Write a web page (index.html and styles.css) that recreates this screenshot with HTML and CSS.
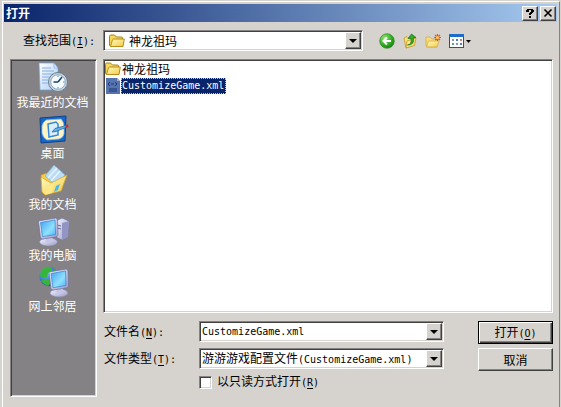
FILE: index.html
```html
<!DOCTYPE html>
<html lang="zh-CN">
<head>
<meta charset="utf-8">
<meta name="viewport" content="width=device-width, initial-scale=1">
<title>打开</title>
<link rel="stylesheet" href="styles.css">
</head>
<body>
<svg class="defs" width="0" height="0" aria-hidden="true">
  <defs>
    <linearGradient id="gold" x1="0" y1="0" x2="1" y2="1"><stop offset="0" stop-color="#fffbc0"/><stop offset="1" stop-color="#f3cb48"/></linearGradient>
    <linearGradient id="paper" x1="0" y1="0" x2="1" y2="1"><stop offset="0" stop-color="#fff"/><stop offset="1" stop-color="#a9cdf5"/></linearGradient>
    <linearGradient id="screen" x1="0" y1="0" x2="1" y2="1"><stop offset="0" stop-color="#3fa2f2"/><stop offset=".6" stop-color="#8fe0fd"/><stop offset="1" stop-color="#4db4f4"/></linearGradient>
    <linearGradient id="shell" x1="0" y1="0" x2="1" y2="1"><stop offset="0" stop-color="#f4f4ff"/><stop offset="1" stop-color="#9b9cc8"/></linearGradient>
    <radialGradient id="green" cx=".35" cy=".3" r=".8"><stop offset="0" stop-color="#9be27c"/><stop offset=".5" stop-color="#3cb52c"/><stop offset="1" stop-color="#14780f"/></radialGradient>
    <radialGradient id="earth" cx=".35" cy=".3" r=".8"><stop offset="0" stop-color="#7cc4ff"/><stop offset="1" stop-color="#0a3c9c"/></radialGradient>
    <symbol id="folder" viewBox="0 0 16 16">
      <path d="M.5 12.500V3.500Q.5 2 2 2H5.500L7.500 4H12.500Q13.500 4 13.500 5V13.500H2Z" fill="#f6d860" stroke="#a88314"/>
      <path d="M1.500 13.500L3.500 6.700Q3.800 6 4.600 6H15.300L14 13.500Z" fill="url(#gold)" stroke="#b58d18"/>
    </symbol>
    <symbol id="monitor" viewBox="0 0 20 30">
      <ellipse cx="10" cy="25" rx="9" ry="4" fill="url(#shell)" stroke="#8787b0" stroke-width=".6"/>
      <path d="M9 18L14 17L14 25Q10 27 7 24Z" fill="#c5c6e6"/>
      <path d="M0 4L17 1Q19 1 19 3L19.500 18Q19 20 17 20L4 22Q2 22 1.800 20Z" fill="url(#shell)" stroke="#6d6e9c" stroke-width=".7"/>
      <path d="M2 5.500L16.500 3L17 17.500L4 19.700Z" fill="url(#screen)" stroke="#2c76c4" stroke-width=".6"/>
    </symbol>
  </defs>
</svg>

<main class="window">
  <header class="titlebar">
    <h1>打开</h1>
    <button class="caption" type="button" aria-label="帮助">
      <svg width="10" height="10" viewBox="0 0 10 10"><path d="M1 4V2H2V1H8V2H9V4H8V5H7V6H6V7H4V5H5V4H6V2H4V4ZM4 8H6V10H4Z"/></svg>
    </button>
    <button class="caption" type="button" aria-label="关闭">
      <svg width="10" height="10" viewBox="0 0 10 10"><path d="M1.500 1.500L8.500 8.500M8.500 1.500L1.500 8.500" stroke="#000" stroke-width="1.600"/></svg>
    </button>
  </header>

  <form class="dialog">
    <div class="lookup">
      <label for="place">查找范围<span class="en">(<u>I</u>):</span></label>
      <div class="combo lookup-combo">
        <svg class="combo-icon" width="16" height="16"><use href="#folder"/></svg>
        <select id="place"><option>神龙祖玛</option></select>
        <span class="arrow"></span>
      </div>
      <div class="tools">
        <button type="button" aria-label="后退">
          <svg width="16" height="16" viewBox="0 0 16 16"><circle cx="8" cy="8" r="7.300" fill="url(#green)" stroke="#2f8f24" stroke-width=".7"/><path d="M12 8H5M8 4.500L4.500 8L8 11.500" fill="none" stroke="#fff" stroke-width="2"/></svg>
        </button>
        <button type="button" aria-label="向上">
          <svg width="16" height="16" viewBox="0 0 16 16"><path d="M2 5L5 3.500L6.500 5L11 4L12 12L4 15Z" fill="#f7df74" stroke="#c49a28" stroke-width=".8"/><path d="M4 15L5 8L14 5L12.500 12.500Z" fill="url(#gold)" stroke="#c49a28" stroke-width=".8"/><path d="M5.500 12Q10 11.500 9 5.500H6L9.500 1L14 4.500H11.300Q13 12 5.500 12Z" fill="#35ad2b" stroke="#176d13" stroke-width=".7"/></svg>
        </button>
        <button type="button" aria-label="新建文件夹">
          <svg width="16" height="16" viewBox="0 0 16 16"><path d="M1 13V4H5L7 6H12V14H2Z" fill="#f7dc76" stroke="#d0a640" stroke-width=".7"/><path d="M1.500 14L3.500 8H14L12 14Z" fill="url(#gold)" stroke="#d0a640" stroke-width=".7"/><path d="M12.500 1V8M9 4.500H16M10 2L15 7M15 2L10 7" stroke="#e8501c" stroke-width="1.200"/><circle cx="12.500" cy="4.500" r="1.500" fill="#ffd46a"/></svg>
        </button>
        <button class="view" type="button" aria-label="查看">
          <svg width="23" height="16" viewBox="0 0 23 16"><rect x="1.500" y="1.500" width="14" height="13" fill="#fff" stroke="#0c57b0"/><path d="M1 1H16V4H1Z" fill="#1b6ccc"/><path d="M4 6H6V8H4ZM8 10H10V12H8Z" fill="#8597b8"/><path d="M8 6H10V8H8ZM12 10H14V12H12Z" fill="#557cc0"/><path d="M12 6H14V8H12Z" fill="#c08378"/><path d="M4 10H6V12H4Z" fill="#55a484"/><path d="M18 7H23L20.500 10Z"/></svg>
        </button>
      </div>
    </div>

    <nav class="places">
      <a href="#recent">
        <svg width="32" height="32" viewBox="0 0 32 32"><path d="M2 1H17L21 6V28H3Z" fill="url(#paper)" stroke="#6ea0df" stroke-width=".7"/><path d="M17 1V6H21Z" fill="#d9ebff" stroke="#6ea0df" stroke-width=".6"/><path d="M5 6H14M5 9H17M5 12H16M5 15H12M5 18H11M5 21H11" stroke="#86aee5"/><circle cx="21" cy="20" r="9.500" fill="#c7d6e4" stroke="#66798c"/><circle cx="21" cy="20" r="7.300" fill="#f4fbff" stroke="#8fa6bb"/><path d="M21 20L25 15M21 20H16.500" stroke="#1d4267" stroke-width="1.600"/><path d="M21 13.500V15M21 25V26.500M26 20H27.500" stroke="#5d85ac"/></svg>
        <span>我最近的文档</span>
      </a>
      <a href="#desktop">
        <svg width="32" height="32" viewBox="0 0 32 32"><path d="M3 5L29 3L28 28L4 30Z" fill="#1668c8" stroke="#0c4294"/><path d="M9 7L24 6Q27 9 27 14V21Q26 25 22 26L10 27Q6 25 5 20V13Q6 9 9 7Z" fill="#fff5c4" stroke="#7fb7ef" stroke-width=".8"/><path d="M11 11L19 9L21 11V22L12 24Z" fill="#d8efff" stroke="#3888dc" stroke-width="1.500"/><path d="M15 19L18 15.500L29 12.500L30 14L19 18.500Z" fill="#5eb2ee" stroke="#235a92" stroke-width=".7"/><path d="M28 12L31 11.500L31.500 14L29 15Z" fill="#c92c35"/></svg>
        <span>桌面</span>
      </a>
      <a href="#documents">
        <svg width="32" height="32" viewBox="0 0 32 32"><path d="M4 11L10 9L13 12L25 10V26L8 30L5 27Z" fill="#f6cf4b" stroke="#c5961c" stroke-width=".7"/><path d="M17 1L28 11L20 22L8 12Z" fill="#badcf6" stroke="#78acd6" stroke-width=".7"/><path d="M20 4L11 14M23 7L14 17" stroke="#e6f5ff" stroke-width="1.500"/><path d="M4 13L14 19L30 11L24 27L8 31L5 28Z" fill="url(#gold)" stroke="#d1a225" stroke-width=".7"/><path d="M14 19L17 20L15 29L8 31Z" fill="#ffe887"/><path d="M19 22L23 20L21 26L17 28Z" fill="#49b9e5"/></svg>
        <span>我的文档</span>
      </a>
      <a href="#computer">
        <svg width="32" height="32" viewBox="0 0 32 32"><path d="M19 6L25 3L32 6L31 22L25 25L19 22Z" fill="url(#shell)" stroke="#7576a5" stroke-width=".7"/><path d="M25 8V25L31 22L32 6Z" fill="#9294c2"/><path d="M20 10L24 11M20 13L24 14" stroke="#6769a0"/><use href="#monitor" x="1" y="2" width="21" height="30"/></svg>
        <span>我的电脑</span>
      </a>
      <a href="#network">
        <svg width="32" height="32" viewBox="0 0 32 32"><circle cx="12" cy="10.500" r="9.700" fill="url(#earth)"/><path d="M5 4Q9 0 14 1L15 5L11 7L10 11L5 12L2.500 9ZM7 13L12 13L14 17L11 20Q6 18 4 15ZM17 3Q21 5 21 10L17 9Z" fill="#36b53a"/><use href="#monitor" x="12" y="2" width="20" height="30"/></svg>
        <span>网上邻居</span>
      </a>
    </nav>

    <ul class="files">
      <li><svg width="16" height="16"><use href="#folder"/></svg><span class="name">神龙祖玛</span></li>
      <li class="selected"><svg width="16" height="16" viewBox="0 0 16 16"><path d="M1 0H12L15 3V16H1Z" fill="#5673ad"/><path d="M12 0V3H15Z" fill="#9db0d3"/><path d="M5 4L3 6L5 8M10 4L12 6L10 8M6 6H9M4 11H12M4 13H12" fill="none" stroke="#183974"/></svg><span class="name en">CustomizeGame.xml</span></li>
    </ul>

    <div class="fields">
      <label for="filename">文件名<span class="en">(<u>N</u>):</span></label>
      <div class="combo">
        <input id="filename" class="en" type="text" value="CustomizeGame.xml">
        <button class="arrow" type="button" aria-label="文件名列表"></button>
      </div>
      <label for="filetype">文件类型<span class="en">(<u>T</u>):</span></label>
      <div class="combo">
        <select id="filetype"><button><selectedcontent></selectedcontent></button><option>游游游戏配置文件<span class="en">(CustomizeGame.xml)</span></option></select>
        <span class="arrow"></span>
      </div>
      <div class="readonly">
        <input id="readonly" type="checkbox">
        <label for="readonly">以只读方式打开<span class="en">(<u>R</u>)</span></label>
      </div>
    </div>

    <div class="actions">
      <button class="push default" type="submit">打开<span class="en">(<u>O</u>)</span></button>
      <button class="push" type="button">取消</button>
    </div>
  </form>
</main>
</body>
</html>
```
FILE: styles.css
```css
:root {
  --face: #d6d3ce;
  --shade: #848284;
  --dark: #424142;
  --navy: #0a246a;
}

* { box-sizing: border-box; }

body {
  margin: 0;
  background: var(--face);
  color: #000;
  font: 12px/16px "Noto Sans CJK SC", sans-serif;
}

button, input, select { font: inherit; color: inherit; margin: 0; }
svg { display: block; flex: none; }
.defs { position: absolute; }
.en { font-family: "DejaVu Sans Mono", monospace; font-size: 10px; white-space: pre; }
u { text-underline-offset: 2px; }

.window {
  min-height: calc(100vh - 1px);
  margin: 1px 1px 0 2px;
  padding: 2px 2px 8px 1px;
  border: solid #fff;
  border-width: 1px 1px 0 1px;
  border-right-color: var(--shade);
}

.titlebar {
  display: flex;
  align-items: center;
  gap: 2px;
  height: 18px;
  padding: 0 1px 0 2px;
  background: linear-gradient(90deg, var(--navy), #a6caf0);
}
.titlebar h1 {
  flex: 1;
  margin: 0;
  color: #fff;
  font-size: 12px;
  line-height: 16px;
}
.caption, .arrow, .push {
  background: var(--face);
  border: 1px solid;
  border-color: #fff var(--dark) var(--dark) #fff;
  box-shadow: inset -1px -1px var(--shade);
}
.caption {
  display: grid;
  place-items: center;
  width: 16px;
  height: 15px;
  padding: 0 1px 1px 0;
}

.dialog {
  display: grid;
  grid-template-columns: 87px minmax(0, 1fr) 75px;
  grid-template-rows: 21px 254px auto;
  gap: 8px 6px;
  padding: 8px 4px 0 6px;
}

.lookup {
  grid-column: 1 / -1;
  display: flex;
  align-items: center;
  padding-left: 13px;
}
.lookup label { flex: 0 0 80px; }

.combo {
  position: relative;
  display: flex;
  height: 21px;
  padding: 1px;
  background: #fff;
  border: 1px solid;
  border-color: var(--shade) #fff #fff var(--shade);
  box-shadow: inset 1px 1px var(--dark), inset -1px -1px var(--face);
}
.lookup-combo { flex: 0 1 260px; }
.combo-icon { position: absolute; left: 5px; top: 2px; pointer-events: none; }
.combo select, .combo input {
  flex: 1;
  min-width: 0;
  min-height: 0;
  height: 17px;
  padding: 0 18px 0 1px;
  border: 0;
  outline: 0;
  background: transparent;
  line-height: 16px;
}
.combo select { appearance: none; }
#filetype { appearance: base-select; }
#filetype::picker-icon { display: none; }
.lookup-combo select { padding-left: 24px; }
.arrow {
  position: absolute;
  top: 1px;
  right: 1px;
  width: 16px;
  height: 17px;
  padding: 0;
  pointer-events: none;
}
button.arrow { pointer-events: auto; }
.arrow::before {
  content: "";
  display: block;
  width: 0;
  margin: 1px auto 0 3px;
  border: 4px solid transparent;
  border-top-color: #000;
  border-bottom: 0;
}
span.arrow::before { margin-top: 6px; }

.tools { display: flex; gap: 7px; margin-left: 16px; }
.tools button { padding: 0; border: 0; background: none; }

.places {
  grid-row: 2 / 4;
  min-height: 338px;
  padding: 2px 2px 0 0;
  background: var(--shade);
  border: 1px solid;
  border-color: var(--shade) #fff #fff var(--shade);
  box-shadow: inset 1px 1px var(--dark), inset -1px -1px var(--face);
}
.places a {
  display: flex;
  flex-direction: column;
  align-items: center;
  height: 51px;
  color: #fff;
  text-decoration: none;
}

.files {
  grid-column: 2 / 4;
  margin: 0;
  padding: 1px 1px;
  list-style: none;
  background: #fff;
  border: 1px solid;
  border-color: var(--shade) #fff #fff var(--shade);
  box-shadow: inset 1px 1px var(--dark), inset -1px -1px var(--face);
}
.files li { display: flex; height: 17px; }
.files .name { padding: 0 2px 0 1px; line-height: 16px; height: 16px; }
.selected .name {
  background: var(--navy);
  color: #fff;
  outline: 1px dotted #d8c878;
  outline-offset: -1px;
}

.fields {
  display: grid;
  grid-template-columns: 95px minmax(0, 245px);
  grid-template-rows: 21px 21px 14px;
  gap: 6px 0;
  align-items: center;
  padding-left: 1px;
}
.readonly { grid-column: 2; display: flex; align-items: center; gap: 5px; }
.readonly input {
  appearance: none;
  width: 13px;
  height: 13px;
  background: #fff;
  border: 1px solid;
  border-color: var(--shade) #fff #fff var(--shade);
  box-shadow: inset 1px 1px var(--dark), inset -1px -1px var(--face);
}
.fields { align-content: start; }

.actions { display: flex; flex-direction: column; gap: 4px; }
.push { height: 23px; padding: 0; line-height: 16px; }
.push.default {
  border-color: #000;
  box-shadow: inset 1px 1px #fff, inset -1px -1px var(--dark), inset -2px -2px var(--shade);
}
```
